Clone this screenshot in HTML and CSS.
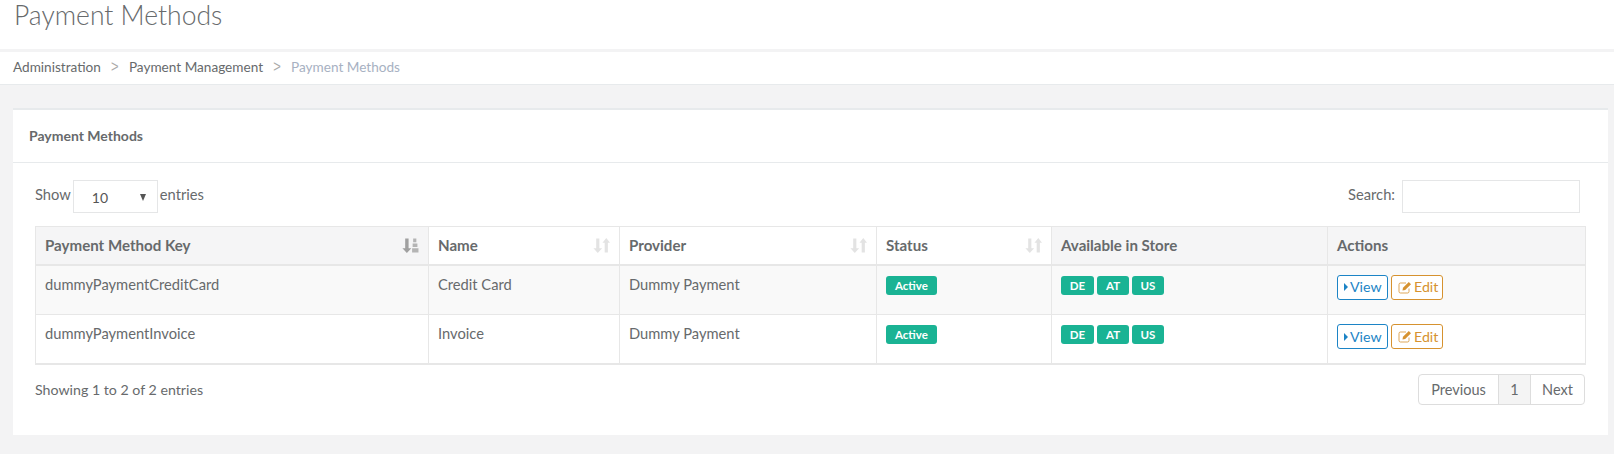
FILE: index.html
```html
<!DOCTYPE html>
<html lang="en">
<head>
<meta charset="utf-8">
<title>Payment Methods</title>
<link rel="stylesheet" href="styles.css">
</head>
<body>
<svg class="defs" width="0" height="0" aria-hidden="true">
  <defs>
    <symbol id="sort" viewBox="0 0 16 16">
      <path d="M3 1.500h3v9h2.600L4.500 15 .4 10.500H3z" fill="#e3e3e3"/>
      <path d="M11 14.500h3v-9h2L12.500 1 8.900 5.500H11z" fill="#e3e3e3"/>
    </symbol>
    <symbol id="sort-active" viewBox="0 0 16 16">
      <path d="M3 1.500h3.200v9h2.600L4.600 15 .4 10.500H3z" fill="#a0a0a0"/>
      <path d="M10.500 1.500h3v3.500h-3zM10 6h4.500v3.500H10zM9.500 10.500h6V14.500h-6z" fill="#b4b4b4"/>
    </symbol>
    <symbol id="edit" viewBox="0 0 14 13">
      <path d="M11 7.500v3A1.500 1.500 0 0 1 9.500 12h-7A1.500 1.500 0 0 1 1 10.500v-7A1.500 1.500 0 0 1 2.500 2H8" fill="none" stroke="currentColor" stroke-width="1" opacity=".8"/>
      <path d="M4.500 9.500 5 6.800 10.800 1l2.200 2.200-5.800 5.800z" fill="currentColor"/>
    </symbol>
  </defs>
</svg>
<header class="page-head"><h1>Payment Methods</h1></header>
<nav class="crumbs">
  <a>Administration</a><span class="sep">&gt;</span><a>Payment Management</a><span class="sep">&gt;</span><span class="current">Payment Methods</span>
</nav>
<main class="content">
  <section class="card">
    <h2 class="card-title">Payment Methods</h2>
    <div class="card-body">
      <div class="toolbar">
        <label class="length">Show <span class="select"><span>10</span><i class="arrow"></i></span> entries</label>
        <label class="search">Search: <span class="input"></span></label>
      </div>
      <table>
        <colgroup>
          <col class="c1"><col class="c2"><col class="c3"><col class="c4"><col class="c5"><col class="c6">
        </colgroup>
        <thead>
          <tr>
            <th class="sorted"><div class="th">Payment Method Key<svg class="sort"><use href="#sort-active"/></svg></div></th>
            <th><div class="th">Name<svg class="sort"><use href="#sort"/></svg></div></th>
            <th><div class="th">Provider<svg class="sort"><use href="#sort"/></svg></div></th>
            <th><div class="th">Status<svg class="sort"><use href="#sort"/></svg></div></th>
            <th class="plain">Available in Store</th>
            <th class="plain">Actions</th>
          </tr>
        </thead>
        <tbody>
          <tr class="odd">
            <td>dummyPaymentCreditCard</td><td>Credit Card</td><td>Dummy Payment</td>
            <td><span class="label">Active</span></td>
            <td><div class="labels"><span class="label">DE</span><span class="label">AT</span><span class="label">US</span></div></td>
            <td class="acts"><div class="btns"><a class="btn view"><i class="caret"></i>View</a><a class="btn edit"><svg class="ico"><use href="#edit"/></svg>Edit</a></div></td>
          </tr>
          <tr>
            <td>dummyPaymentInvoice</td><td>Invoice</td><td>Dummy Payment</td>
            <td><span class="label">Active</span></td>
            <td><div class="labels"><span class="label">DE</span><span class="label">AT</span><span class="label">US</span></div></td>
            <td class="acts"><div class="btns"><a class="btn view"><i class="caret"></i>View</a><a class="btn edit"><svg class="ico"><use href="#edit"/></svg>Edit</a></div></td>
          </tr>
        </tbody>
      </table>
      <div class="foot">
        <span>Showing 1 to 2 of 2 entries</span>
        <div class="pager"><a class="prev">Previous</a><a class="page">1</a><a class="next">Next</a></div>
      </div>
    </div>
  </section>
</main>
</body>
</html>
```

FILE: styles.css
```css
* { box-sizing: border-box; }
html, body { margin: 0; height: 100%; }
body {
  background: #f3f3f4;
  color: #676a6c;
  font: 14.700px/18px Lato, "Liberation Sans", sans-serif;
  overflow: hidden;
}
.defs { position: absolute; }
.page-head { background: #fff; height: 49px; padding: 0 14px; }
.page-head h1 { margin: 0; font-size: 26.500px; line-height: 31px; font-weight: 300; color: #676a6c; }
.crumbs {
  margin-top: 3px;
  background: #fff;
  height: 33px;
  padding: 0 13px 2px;
  display: flex;
  align-items: center;
  border-bottom: 1px solid #e7eaec;
  font-size: 13.600px;
}
.sep { color: #a9a9a9; width: 28px; text-align: center; font-size: 13px; font-family: "Liberation Sans", sans-serif; transform: scaleY(1.2); }
.current { color: #a7b1c2; }
.content { padding: 23px 6px 0 13px; }
.card { background: #fff; border-top: 2px solid #e7eaec; height: 327px; }
.card-title {
  margin: 0;
  height: 53px;
  padding: 0 16px;
  display: flex;
  align-items: center;
  font-size: 14px;
  font-weight: 700;
  color: #676a6c;
  border-bottom: 1px solid #e7eaec;
}
.card-body { padding: 17px 23px 0 22px; }
.toolbar { display: flex; justify-content: space-between; height: 46px; padding-right: 5px; }
.length, .search { display: flex; gap: 2px; height: 33px; line-height: 29px; }
.search { gap: 7px; }
.select {
  width: 85px; height: 33px;
  border: 1px solid #e5e6e7;
  padding: 1px 8px 0 18px;
  display: flex; justify-content: space-between; align-items: center;
  color: #555;
  font-size: 14px;
}
.arrow { width: 0; height: 0; border-left: 3.500px solid transparent; border-right: 3.500px solid transparent; border-top: 7px solid #555; margin: 0 3px 0 0; }
.input { display: block; width: 178px; height: 33px; border: 1px solid #e5e6e7; }
table { width: 1550px; table-layout: fixed; border-collapse: collapse; border: 1px solid #e7e7e7; }
.c1 { width: 393px; } .c2 { width: 191px; } .c3 { width: 257px; }
.c4 { width: 175px; } .c5 { width: 276px; } .c6 { width: 258px; }
th, td { border: 1px solid #e7e7e7; padding: 0 9px; text-align: left; }
th { height: 38px; font-weight: 700; font-size: 15.100px; border-bottom-width: 2px; background: #fff; }
th.sorted, th.plain { background: #f5f5f6; }
.th { display: flex; justify-content: space-between; align-items: center; }
.sort { width: 17px; height: 17px; margin-right: 0; }
td { height: 49px; vertical-align: top; padding-top: 9px; font-size: 14.700px; }
.odd td { background: #f9f9f9; height: 50px; }
tbody tr:last-child td { border-bottom-width: 2px; height: 49px; }
.labels { display: flex; gap: 3px; }
.label {
  display: inline-block;
  background: #1ab394;
  color: #fff;
  font-size: 11.500px;
  font-weight: 700;
  line-height: 14px;
  padding: 3px 9px 2px;
  border-radius: 3px;
  vertical-align: top;
  margin-top: 1px;
}
.labels .label { width: 32px; text-align: center; padding-left: 0; padding-right: 0; }
.labels .label:first-child { width: 33px; }
.acts { padding-top: 9px; }
.btns { display: flex; gap: 3px; }
.btn {
  display: flex; align-items: center; gap: 2px;
  height: 25px;
  border: 1px solid;
  border-radius: 3px;
  background: #fff;
  font-size: 14.200px;
  padding: 0 0 0 6px;
}
.view { color: #1c84c6; width: 51px; }
.edit { color: #d6922f; width: 52px; }
.caret { width: 0; height: 0; border-left: 4px solid currentColor; border-top: 4px solid transparent; border-bottom: 4px solid transparent; }
.ico { width: 14px; height: 13px; }
.foot { display: flex; justify-content: space-between; align-items: flex-start; margin-top: 9px; }
.foot > span { font-size: 14.200px; padding-top: 7px; }
.pager { display: flex; height: 31px; border: 1px solid #ddd; border-radius: 4px; line-height: 29px; font-size: 14.500px; color: #676a6c; }
.pager a { display: block; text-align: center; }
.prev { width: 79px; }
.page { width: 33px; background: #f4f4f4; border-left: 1px solid #ddd; border-right: 1px solid #ddd; }
.next { width: 53px; }
```
